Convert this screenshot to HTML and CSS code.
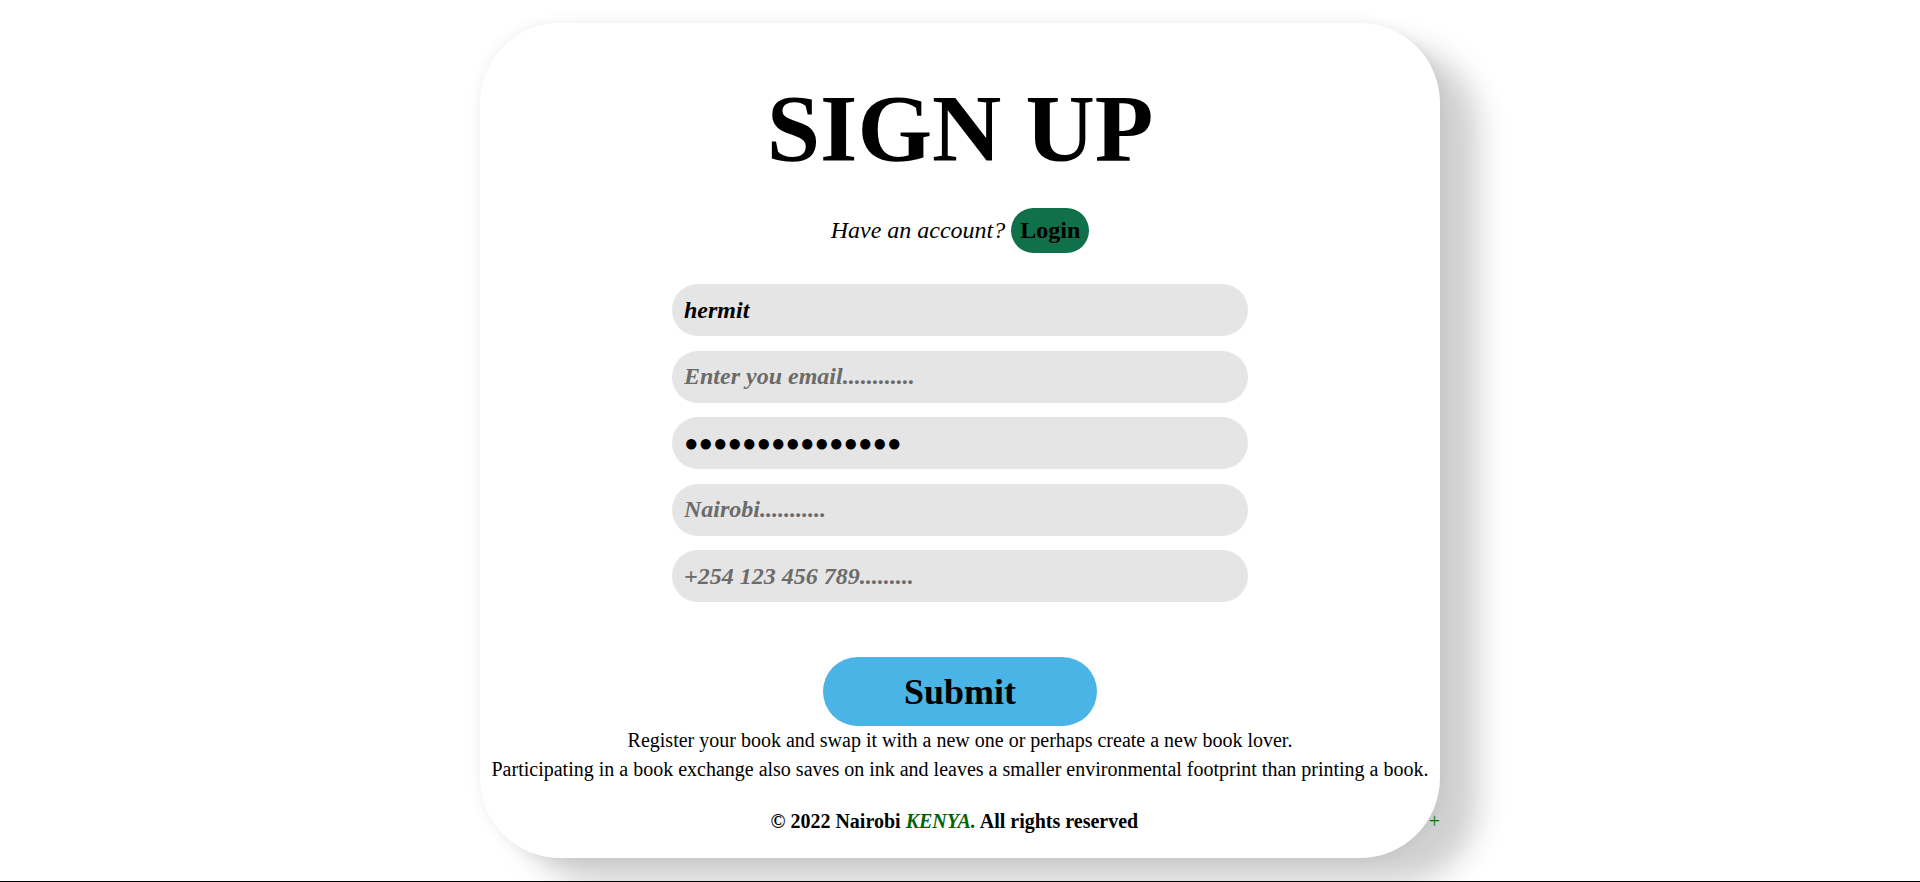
FILE: index.html
```html
<!DOCTYPE html>
<html lang="en">
<head>
<meta charset="utf-8">
<title>Sign Up</title>
<link rel="stylesheet" href="styles.css">
</head>
<body>
<main class="card">
  <h1 class="title">SIGN UP</h1>
  <p class="account">Have an account? <button class="login" type="button">Login</button></p>
  <form class="form" onsubmit="return false;">
    <input class="field" type="text" value="hermit">
    <input class="field" type="email" placeholder="Enter you email............">
    <input class="field" type="text" value="●●●●●●●●●●●●●●●" aria-label="Password" readonly>
    <input class="field" type="text" placeholder="Nairobi...........">
    <input class="field" type="tel" placeholder="+254 123 456 789.........">
    <button class="submit" type="submit">Submit</button>
  </form>
  <div class="about">
    <p class="about-line">Register your book and swap it with a new one or perhaps create a new book lover.</p>
    <p class="about-line">Participating in a book exchange also saves on ink and leaves a smaller environmental footprint than printing a book.</p>
  </div>
  <p class="copy"><span class="plus">+</span>© 2022 Nairobi <em class="country">KENYA.</em> All rights reserved</p>
</main>
<div class="rule"></div>
</body>
</html>
```

FILE: styles.css
```css
html, body {
  margin: 0;
  padding: 0;
  background: #ffffff;
}

body {
  font-family: "Liberation Serif", "Times New Roman", serif;
  color: #000;
}

.card {
  width: 960px;
  margin: 23px auto 0;
  padding: 51px 0 25px;
  box-sizing: border-box;
  background: #ffffff;
  border-radius: 80px;
  box-shadow: 0 0 14px rgba(0, 0, 0, 0.07), 38px 25px 30px #d0d0d0;
  text-align: center;
}

.title {
  margin: 0;
  font-size: 96px;
  line-height: 110px;
  font-weight: bold;
}

.account {
  margin: 24px 0 0;
  font-size: 24px;
  font-style: italic;
}

.login {
  font-family: inherit;
  font-size: 24px;
  font-weight: bold;
  font-style: normal;
  color: #000;
  background: #0f7049;
  border: none;
  border-radius: 23px;
  padding: 9px 9px;
  margin: 0;
}

.form {
  margin: 31px 0 0;
  display: flex;
  flex-direction: column;
  align-items: center;
  gap: 14.5px;
}

.field {
  display: block;
  width: 576px;
  height: 52px;
  box-sizing: border-box;
  margin: 0;
  padding: 0 12px;
  border: none;
  border-radius: 26px;
  background: #e5e5e5;
  font-family: inherit;
  font-size: 24px;
  font-weight: bold;
  font-style: italic;
  color: #000;
  outline: none;
}

.field::placeholder {
  color: #6b6b6b;
  opacity: 1;
}

.submit {
  margin-top: 40.5px;
  width: 274px;
  height: 69px;
  border: none;
  border-radius: 35px;
  background: #4ab4e6;
  font-family: inherit;
  font-size: 36px;
  font-weight: bold;
  color: #000;
  padding: 0;
}

.about {
  margin: 0;
}

.about-line {
  margin: 0;
  font-size: 20px;
  line-height: 29px;
}

.copy {
  margin: 26px 0 0;
  font-size: 20px;
  line-height: 23px;
  font-weight: bold;
}

.country {
  color: #006400;
}

.plus {
  float: right;
  font-weight: normal;
  color: #007a00;
}

.rule {
  margin-top: 23px;
  border-top: 2px solid #000;
  height: 40px;
}
```
